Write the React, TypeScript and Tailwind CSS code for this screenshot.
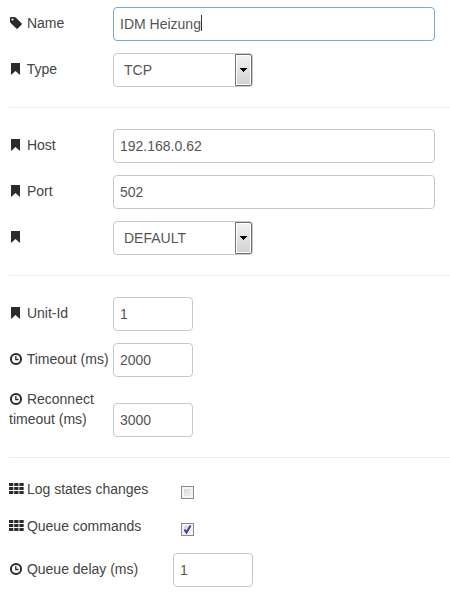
import { ChangeEvent, ReactNode, useState } from "react";
import clsx from "clsx";

const icons = {
  tag: (
    <path
      transform="scale(0.0078125)"
      d="M576 448q0-53-37.500-90.500t-90.500-37.500-90.500 37.500-37.500 90.500 37.500 90.500 90.500 37.500 90.500-37.500 37.500-90.500zm1067 576q0 53-37 90l-491 492q-39 37-91 37-53 0-90-37l-715-716q-38-37-64.500-101t-26.500-117v-416q0-52 38-90t90-38h416q53 0 117 26.500t102 64.500l715 714q37 39 37 91z"
    />
  ),
  bookmark: <path d="M2 1h9v12L6.500 9 2 13z" />,
  clock: (
    <g fill="none" stroke="#2b2b2b">
      <circle cx="7" cy="7" r="5.100" strokeWidth="2" />
      <path d="M6.800 4v3.500H9.500" strokeWidth="1.300" />
    </g>
  ),
  grid: (
    <path d="M0 1h4.300v3H0zM5.200 1h4.300v3H5.200zM10.400 1h4.300v3h-4.300zM0 5h4.300v3H0zM5.200 5h4.300v3H5.200zM10.400 5h4.300v3h-4.300zM0 9h4.300v3H0zM5.200 9h4.300v3H5.200zM10.400 9h4.300v3h-4.300z" />
  ),
};

type RowProps = {
  id: string;
  icon: keyof typeof icons;
  label?: string;
  wide?: boolean;
  children: ReactNode;
};

function Row({ id, icon, label, wide, children }: RowProps) {
  return (
    <div className="flex items-end pr-[15px]">
      <label
        htmlFor={id}
        className={clsx("shrink-0 pb-2 leading-5", wide ? "w-[164px]" : "w-[104px]")}
      >
        <svg
          viewBox="0 0 14 14"
          className="inline-block h-3.5 w-3.5 overflow-visible align-[-2px]"
          fill="#2b2b2b"
          aria-hidden="true"
        >
          {icons[icon]}
        </svg>{" "}
        {label}
      </label>
      {children}
    </div>
  );
}

type FieldProps = {
  name: string;
  value: string;
  onChange: (e: ChangeEvent<HTMLInputElement>) => void;
  small?: boolean;
};

function TextField({ name, value, onChange, small }: FieldProps) {
  return (
    <input
      id={name}
      name={name}
      type="text"
      value={value}
      onChange={onChange}
      className={clsx(
        "h-[34px] rounded border border-[#c8c8c8] bg-white px-1.5 text-[#555] outline-none focus:border-[#7aa7d2]",
        small ? "w-20" : "w-full min-w-0"
      )}
    />
  );
}

function SelectField({ name, options }: { name: string; options: string[] }) {
  return (
    <div className="relative w-[140px]">
      <select
        id={name}
        name={name}
        aria-label={name}
        className="block h-[34px] w-full appearance-none rounded border border-[#c8c8c8] bg-white pr-5 pl-2.5 text-[#555] outline-none"
      >
        {options.map(option => (
          <option key={option}>{option}</option>
        ))}
      </select>
      <span className="pointer-events-none absolute inset-y-px right-px flex w-[17px] items-center justify-center rounded-r-xs border border-[#707070] bg-linear-to-b from-[#f2f2f2] to-[#d2d2d2] inset-ring inset-ring-white">
        <svg viewBox="0 0 7 4" className="h-1 w-[7px]" fill="#000" shapeRendering="crispEdges">
          <path d="M0 0h7v1H6v1H5v1H4v1H3V3H2V2H1V1H0z" />
        </svg>
      </span>
    </div>
  );
}

function CheckField({ name, defaultChecked }: { name: string; defaultChecked?: boolean }) {
  return (
    <div className="relative mb-2 ml-2 h-[13px] w-[13px]">
      <input
        id={name}
        name={name}
        type="checkbox"
        defaultChecked={defaultChecked}
        className="peer block h-[13px] w-[13px] appearance-none border border-[#8a8c8c] bg-linear-to-br from-[#cdd0d2] to-[#f8f8f8] inset-ring-2 inset-ring-[#f4f4f4]"
      />
      <svg
        viewBox="0 0 13 13"
        className="pointer-events-none absolute inset-0 hidden h-[13px] w-[13px] peer-checked:block"
        fill="none"
        stroke="#42458f"
        strokeWidth="2"
      >
        <path d="M3.500 6.500 5.500 9.500 9.500 2.500" />
      </svg>
    </div>
  );
}

function Divider() {
  return <hr className="mt-5 mb-[21px] border-[#ebebeb]" />;
}

export default function App() {
  const [config, setConfig] = useState({
    name: "IDM Heizung",
    host: "192.168.0.62",
    port: "502",
    unitId: "1",
    timeout: "2000",
    reconnect: "3000",
    delay: "1",
  });

  const handleChange = (e: ChangeEvent<HTMLInputElement>) => {
    const { name, value } = e.target;
    setConfig(prevState => ({ ...prevState, [name]: value }));
  };

  return (
    <form className="bg-white pt-[7px] pb-2 pl-[9px] font-['Liberation_Sans',Arial,sans-serif] text-[14px] leading-5 text-[#444]">
      <div className="space-y-3">
        <Row id="name" icon="tag" label="Name">
          <div className="relative min-w-0 flex-1">
            <input
              id="name"
              name="name"
              type="text"
              value={config.name}
              onChange={handleChange}
              className="peer block h-[34px] w-full rounded border border-[#7aa7d2] bg-white px-1.5 text-[#555] outline-none"
            />
            {/* resting caret, gives way to the real one on focus */}
            <span className="pointer-events-none absolute top-2 left-[88px] h-4 w-px bg-[#333] peer-focus:hidden" />
          </div>
        </Row>
        <Row id="type" icon="bookmark" label="Type">
          <SelectField name="type" options={["TCP", "Serial"]} />
        </Row>
      </div>
      <Divider />
      <div className="space-y-3">
        <Row id="host" icon="bookmark" label="Host">
          <TextField name="host" value={config.host} onChange={handleChange} />
        </Row>
        <Row id="port" icon="bookmark" label="Port">
          <TextField name="port" value={config.port} onChange={handleChange} />
        </Row>
        <Row id="mode" icon="bookmark">
          <SelectField name="mode" options={["DEFAULT", "TELNET"]} />
        </Row>
      </div>
      <Divider />
      <div className="space-y-3">
        <Row id="unitId" icon="bookmark" label="Unit-Id">
          <TextField name="unitId" value={config.unitId} onChange={handleChange} small />
        </Row>
        <Row id="timeout" icon="clock" label="Timeout (ms)">
          <TextField name="timeout" value={config.timeout} onChange={handleChange} small />
        </Row>
        <Row id="reconnect" icon="clock" label="Reconnect timeout (ms)">
          <TextField name="reconnect" value={config.reconnect} onChange={handleChange} small />
        </Row>
      </div>
      <Divider />
      <div className="space-y-[9px]">
        <Row id="logStates" icon="grid" label="Log states changes" wide>
          <CheckField name="logStates" />
        </Row>
        <Row id="queueCommands" icon="grid" label="Queue commands" wide>
          <CheckField name="queueCommands" defaultChecked />
        </Row>
        <Row id="delay" icon="clock" label="Queue delay (ms)" wide>
          <TextField name="delay" value={config.delay} onChange={handleChange} small />
        </Row>
      </div>
    </form>
  );
}
